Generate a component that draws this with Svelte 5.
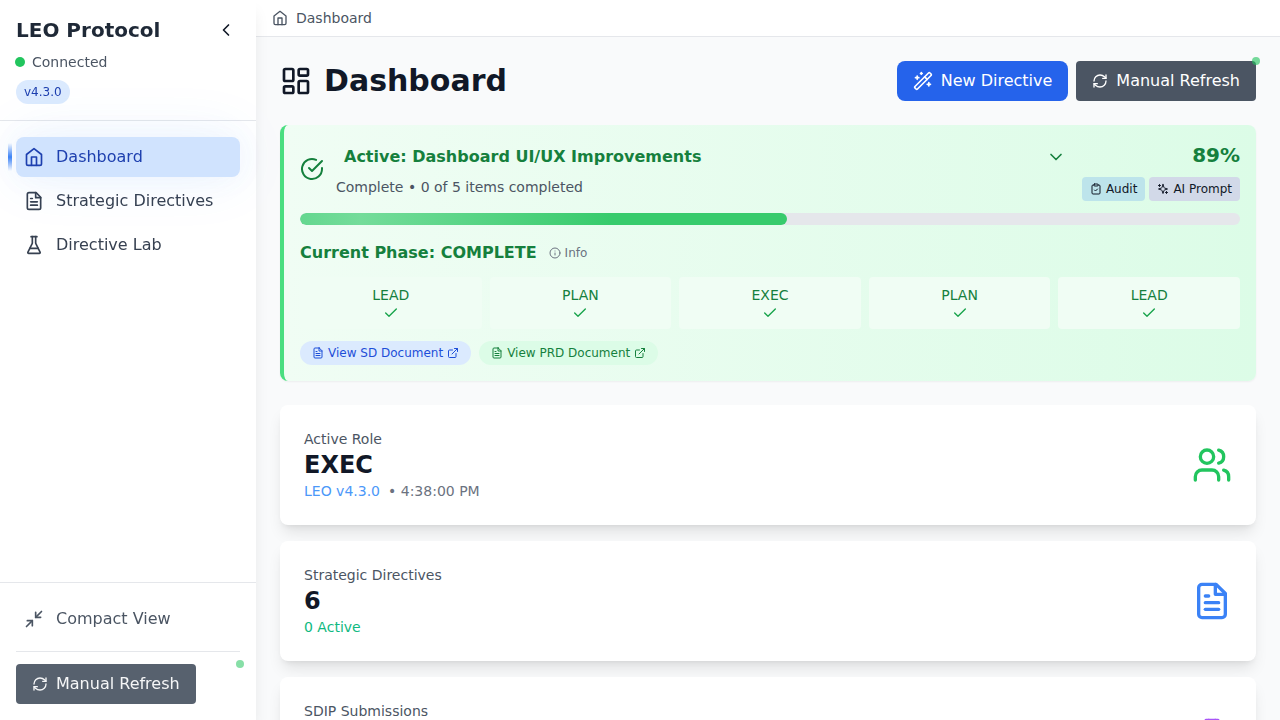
<script>
  const icons = {
    home: '<path d="m3 9 9-7 9 7v11a2 2 0 0 1-2 2H5a2 2 0 0 1-2-2z"/><polyline points="9 22 9 12 15 12 15 22"/>',
    file: '<path d="M14.5 2H6a2 2 0 0 0-2 2v16a2 2 0 0 0 2 2h12a2 2 0 0 0 2-2V7.5L14.5 2z"/><polyline points="14 2 14 8 20 8"/><line x1="16" x2="8" y1="13" y2="13"/><line x1="16" x2="8" y1="17" y2="17"/><line x1="10" x2="8" y1="9" y2="9"/>',
    flask: '<path d="M10 2v7.527a2 2 0 0 1-.211.896L4.72 20.55a1 1 0 0 0 .9 1.45h12.76a1 1 0 0 0 .9-1.45l-5.069-10.127A2 2 0 0 1 14 9.527V2"/><path d="M8.5 2h7"/><path d="M7 16h10"/>',
    left: '<path d="m15 18-6-6 6-6"/>',
    down: '<path d="m6 9 6 6 6-6"/>',
    minimize: '<polyline points="4 14 10 14 10 20"/><polyline points="20 10 14 10 14 4"/><line x1="14" x2="21" y1="10" y2="3"/><line x1="3" x2="10" y1="21" y2="14"/>',
    refresh: '<path d="M3 12a9 9 0 0 1 9-9 9.75 9.75 0 0 1 6.74 2.74L21 8"/><path d="M21 3v5h-5"/><path d="M21 12a9 9 0 0 1-9 9 9.75 9.75 0 0 1-6.74-2.74L3 16"/><path d="M8 16H3v5"/>',
    wand: '<path d="m21.64 3.64-1.28-1.28a1.21 1.21 0 0 0-1.72 0L2.36 18.64a1.21 1.21 0 0 0 0 1.72l1.28 1.28a1.2 1.2 0 0 0 1.72 0L21.64 5.36a1.2 1.2 0 0 0 0-1.72Z"/><path d="m14 7 3 3"/><path d="M5 6v4"/><path d="M19 14v4"/><path d="M10 2v2"/><path d="M7 8H3"/><path d="M21 16h-4"/><path d="M11 3H9"/>',
    layout: '<rect width="7" height="9" x="3" y="3" rx="1"/><rect width="7" height="5" x="14" y="3" rx="1"/><rect width="7" height="9" x="14" y="12" rx="1"/><rect width="7" height="5" x="3" y="16" rx="1"/>',
    circleCheck: '<path d="M22 11.08V12a10 10 0 1 1-5.93-9.14"/><path d="m9 11 3 3L22 4"/>',
    clipboard: '<rect width="8" height="4" x="8" y="2" rx="1" ry="1"/><path d="M16 4h2a2 2 0 0 1 2 2v14a2 2 0 0 1-2 2H6a2 2 0 0 1-2-2V6a2 2 0 0 1 2-2h2"/><path d="m9 14 2 2 4-4"/>',
    sparkles: '<path d="m12 3-1.912 5.813a2 2 0 0 1-1.275 1.275L3 12l5.813 1.912a2 2 0 0 1 1.275 1.275L12 21l1.912-5.813a2 2 0 0 1 1.275-1.275L21 12l-5.813-1.912a2 2 0 0 1-1.275-1.275L12 3Z"/><path d="M5 3v4"/><path d="M19 17v4"/><path d="M3 5h4"/><path d="M17 19h4"/>',
    info: '<circle cx="12" cy="12" r="10"/><path d="M12 16v-4"/><path d="M12 8h.01"/>',
    check: '<polyline points="20 6 9 17 4 12"/>',
    external: '<path d="M18 13v6a2 2 0 0 1-2 2H5a2 2 0 0 1-2-2V8a2 2 0 0 1 2-2h6"/><polyline points="15 3 21 3 21 9"/><line x1="10" x2="21" y1="14" y2="3"/>',
    users: '<path d="M16 21v-2a4 4 0 0 0-4-4H6a4 4 0 0 0-4 4v2"/><circle cx="9" cy="7" r="4"/><path d="M22 21v-2a4 4 0 0 0-3-3.87"/><path d="M16 3.13a4 4 0 0 1 0 7.75"/>'
  };
  const nav = [
    { label: 'Dashboard', icon: 'home', active: true },
    { label: 'Strategic Directives', icon: 'file' },
    { label: 'Directive Lab', icon: 'flask' }
  ];
  const phases = ['LEAD', 'PLAN', 'EXEC', 'PLAN', 'LEAD'];
  const progress = 51.8;
</script>

{#snippet icon(name, size)}
  <svg width={size} height={size} viewBox="0 0 24 24" fill="none" stroke="currentColor" stroke-width="2" stroke-linecap="round" stroke-linejoin="round" aria-hidden="true">{@html icons[name]}</svg>
{/snippet}

<div class="app">
  <aside>
    <header class="brand">
      <div class="brand-row">
        <h1>LEO Protocol</h1>
        <button class="collapse" aria-label="Collapse sidebar">{@render icon('left', 20)}</button>
      </div>
      <div class="status"><span class="status-dot"></span>Connected</div>
      <span class="version">v4.3.0</span>
    </header>
    <nav>
      {#each nav as item}
        <a class="item" class:active={item.active} href="#top">{@render icon(item.icon, 20)}<span>{item.label}</span></a>
      {/each}
    </nav>
    <footer>
      <button class="item">{@render icon('minimize', 20)}<span>Compact View</span></button>
      <div class="side-refresh">
        <button class="refresh">{@render icon('refresh', 16)}<span>Manual Refresh</span></button>
        <i class="pulse"></i>
      </div>
    </footer>
  </aside>

  <div class="page">
    <div class="crumbs">{@render icon('home', 16)}<span>Dashboard</span></div>
    <main>
      <div class="title-row">
        <h2>{@render icon('layout', 32)}<span>Dashboard</span></h2>
        <div class="actions">
          <button class="new">{@render icon('wand', 20)}<span>New Directive</span></button>
          <div class="refresh-wrap">
            <button class="refresh">{@render icon('refresh', 16)}<span>Manual Refresh</span></button>
            <i class="pulse"></i>
          </div>
        </div>
      </div>

      <section class="directive">
        <div class="directive-head">
          {@render icon('circleCheck', 24)}
          <div class="directive-text">
            <button class="picker"><span>Active: Dashboard UI/UX Improvements</span>{@render icon('down', 20)}</button>
            <p>Complete • 0 of 5 items completed</p>
          </div>
          <div class="score">
            <strong>89%</strong>
            <div class="tools">
              <button class="audit">{@render icon('clipboard', 12)}Audit</button>
              <button class="prompt">{@render icon('sparkles', 12)}AI Prompt</button>
            </div>
          </div>
        </div>
        <div class="bar"><div class="fill" style="width: {progress}%"></div></div>
        <div class="phase-title"><h3>Current Phase: COMPLETE</h3><button>{@render icon('info', 12)}Info</button></div>
        <div class="phases">
          {#each phases as phase}
            <div class="phase"><span>{phase}</span>{@render icon('check', 16)}</div>
          {/each}
        </div>
        <div class="docs">
          <button class="sd">{@render icon('file', 12)}View SD Document{@render icon('external', 12)}</button>
          <button class="prd">{@render icon('file', 12)}View PRD Document{@render icon('external', 12)}</button>
        </div>
      </section>

      <div class="cards">
        <section class="card">
          <div class="stat">
            <p>Active Role</p>
            <strong>EXEC</strong>
            <p class="meta"><span class="leo">LEO v4.3.0</span><span>• 4:38:00 PM</span></p>
          </div>
          <span class="green">{@render icon('users', 40)}</span>
        </section>
        <section class="card">
          <div class="stat">
            <p>Strategic Directives</p>
            <strong>6</strong>
            <p class="count">0 Active</p>
          </div>
          <span class="blue">{@render icon('file', 40)}</span>
        </section>
        <section class="card">
          <div class="stat">
            <p>SDIP Submissions</p>
          </div>
          <span class="purple">{@render icon('flask', 40)}</span>
        </section>
      </div>
    </main>
  </div>
</div>

<style>
  :global(body) { overflow: hidden; }
  .app, .app * { box-sizing: border-box; margin: 0; }
  .app { display: flex; height: 720px; overflow: hidden; background: #f9fafb; font: 16px/24px "DejaVu Sans", sans-serif; color: #111827; }
  button { border: 0; padding: 0; background: none; font: inherit; color: inherit; }
  svg { display: block; flex: none; }

  aside { width: 256px; flex: none; display: flex; flex-direction: column; background: #fff; position: relative; z-index: 1; will-change: transform; box-shadow: 0 10px 15px -3px rgb(0 0 0 / .1), 0 4px 6px -4px rgb(0 0 0 / .1); }
  .brand { height: 121px; padding: 16px; border-bottom: 1px solid #e5e7eb; }
  .brand-row { display: flex; align-items: center; justify-content: space-between; height: 28px; }
  h1 { font-size: 20px; line-height: 28px; font-weight: 700; color: #1f2937; }
  .collapse { padding: 4px; color: #111827; }
  .status { display: flex; align-items: center; gap: 8px; margin-top: 8px; font-size: 14px; line-height: 20px; color: #4b5563; }
  .status-dot { width: 10px; height: 10px; margin: 0 -1px; border-radius: 50%; background: #22c55e; }
  .version { display: inline-block; margin-top: 8px; padding: 4px 8px; border-radius: 12px; background: #dbeafe; color: #1e40af; font-size: 12px; line-height: 16px; }
  nav { flex: 1; padding: 16px; display: flex; flex-direction: column; gap: 4px; }
  .item { display: flex; align-items: center; gap: 12px; width: 100%; height: 40px; padding: 8px; border-radius: 8px; color: #374151; text-decoration: none; text-align: left; }
  .item.active { position: relative; background: #d0e3fe; color: #1e40af; box-shadow: 0 0 30px rgb(59 130 246 / .06), 0 0 60px rgb(59 130 246 / .09); }
  .item.active::before { content: ""; position: absolute; left: -8px; top: 6px; width: 4px; height: 28px; background: linear-gradient(transparent, #3b82f6, transparent); }
  footer { height: 138px; padding: 16px; border-top: 1px solid #e5e7eb; }
  footer .item { color: #4b5563; }
  .side-refresh { position: relative; margin-top: 12px; padding-top: 12px; border-top: 1px solid #e5e7eb; }
  .refresh { display: flex; align-items: center; gap: 8px; height: 40px; padding: 8px 16px; border-radius: 4px; background: #4b5563; color: #fff; }
  .side-refresh .refresh { background: #57616e; color: #f5f6f7; }
  .pulse { position: absolute; top: -4px; right: -4px; width: 8px; height: 8px; border-radius: 50%; background: rgb(74 222 128 / .7); }
  .side-refresh .pulse { top: 8px; background: #87dfa7; }

  .page { flex: 1; min-width: 0; }
  .crumbs { display: flex; align-items: center; gap: 8px; height: 37px; padding: 8px 16px; background: #fff; border-bottom: 1px solid #e5e7eb; font-size: 14px; line-height: 20px; color: #4b5563; }
  main { padding: 24px; }
  .title-row { display: flex; align-items: center; justify-content: space-between; height: 40px; margin-bottom: 24px; }
  h2 { display: flex; align-items: center; gap: 12px; font-size: 30px; line-height: 36px; font-weight: 700; color: #111827; }
  .actions { display: flex; gap: 8px; }
  .new { display: flex; align-items: center; gap: 8px; height: 40px; padding: 8px 16px; border-radius: 8px; background: #2563eb; color: #fff; }
  .refresh-wrap { position: relative; }
  .refresh-wrap .pulse { background: rgb(34 197 94 / .62); }

  .directive { height: 256px; padding: 16px; border-left: 4px solid #4ade80; border-radius: 8px; background: linear-gradient(to right, #f0fdf4, #dcfce7); box-shadow: 0 1px 2px rgb(0 0 0 / .05); color: #15803d; }
  .directive-head { display: flex; height: 60px; gap: 12px; margin-bottom: 12px; }
  .directive-head > :global(svg) { margin-top: 16px; }
  .directive-text { flex: 1; }
  .picker { display: flex; align-items: center; justify-content: space-between; width: 100%; height: 32px; padding: 0 4px 0 8px; font-weight: 700; }
  .directive-text p { margin-top: 4px; font-size: 14px; line-height: 20px; color: #4b5563; }
  .score { display: flex; flex-direction: column; align-items: flex-end; gap: 8px; }
  .score strong { font-size: 20px; line-height: 28px; }
  .tools { display: flex; gap: 4px; }
  .tools button { display: flex; align-items: center; gap: 4px; height: 24px; padding: 4px 8px; border-radius: 4px; font-size: 12px; line-height: 16px; color: #111827; }
  .tools .audit { background: #bde4eb; }
  .tools .prompt { background: #d2d9e8; }
  .bar { height: 12px; border-radius: 6px; background: #e5e7eb; overflow: hidden; }
  .fill { height: 12px; border-radius: 6px; background: linear-gradient(to right, #64d78f 0, #74dc9a 12.5%, #37cb6c 64%, #37cb6c 100%); }
  .phase-title { display: flex; align-items: center; gap: 12px; margin-top: 16px; height: 24px; }
  h3 { font-size: 16px; line-height: 24px; font-weight: 700; }
  .phase-title button { display: flex; align-items: center; gap: 4px; font-size: 12px; line-height: 16px; color: #6b7280; }
  .phases { display: grid; grid-template-columns: repeat(5, 1fr); gap: 8px; margin-top: 12px; }
  .phase { display: flex; flex-direction: column; align-items: center; height: 52px; padding: 8px; border-radius: 4px; background: #f0fdf4; font-size: 14px; line-height: 20px; }
  .phase :global(svg) { color: #16a34a; }
  .docs { display: flex; gap: 8px; margin-top: 12px; }
  .docs button { display: flex; align-items: center; gap: 4px; height: 24px; padding: 4px 12px; border-radius: 12px; font-size: 12px; line-height: 16px; }
  .docs .sd { background: #dbeafe; color: #1d4ed8; }
  .docs .prd { background: #dcfce7; color: #15803d; }

  .cards { display: grid; gap: 16px; margin-top: 24px; }
  .card { display: flex; align-items: center; justify-content: space-between; height: 120px; padding: 24px; border-radius: 8px; background: #fff; box-shadow: 0 10px 15px -3px rgb(0 0 0 / .1), 0 4px 6px -4px rgb(0 0 0 / .1); }
  .stat { min-height: 72px; }
  .card p { font-size: 14px; line-height: 20px; color: #4b5563; }
  .card strong { display: block; font-size: 24px; line-height: 32px; }
  .card .meta { display: flex; gap: 8px; color: #6b7280; }
  .leo { color: #4c98f9; }
  .card .count { color: #10b981; }
  .green { color: #22c55e; }
  .blue { color: #3b82f6; }
  .purple { color: #a855f7; }
</style>
